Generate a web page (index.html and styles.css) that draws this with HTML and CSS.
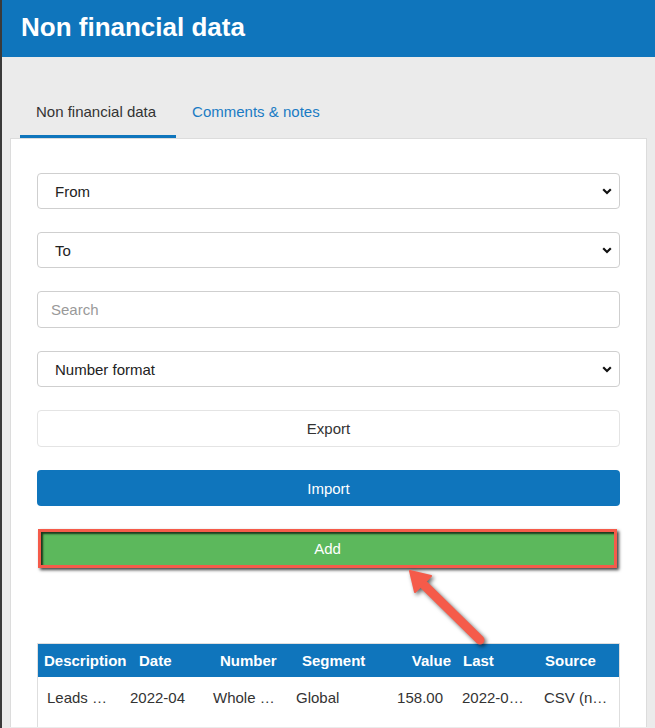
FILE: index.html
```html
<!DOCTYPE html>
<html>
<head>
<meta charset="utf-8">
<link rel="stylesheet" href="styles.css">
</head>
<body>
<div class="app">
  <header class="top"><h1 class="title">Non financial data</h1></header>
  <nav class="tabs">
    <a class="tab active">Non financial data</a>
    <a class="tab">Comments &amp; notes</a>
  </nav>
  <main class="panel">
    <div class="field select"><span>From</span><svg class="chev" width="10" height="7" viewBox="0 0 10 7"><path d="M1.2 1.3 L5 5 L8.8 1.3" fill="none" stroke="#111" stroke-width="2.2"/></svg></div>
    <div class="field select"><span>To</span><svg class="chev" width="10" height="7" viewBox="0 0 10 7"><path d="M1.2 1.3 L5 5 L8.8 1.3" fill="none" stroke="#111" stroke-width="2.2"/></svg></div>
    <div class="field search"><span>Search</span></div>
    <div class="field select"><span>Number format</span><svg class="chev" width="10" height="7" viewBox="0 0 10 7"><path d="M1.2 1.3 L5 5 L8.8 1.3" fill="none" stroke="#111" stroke-width="2.2"/></svg></div>
    <div class="btn btn-export">Export</div>
    <div class="btn btn-import">Import</div>
    <div class="btn btn-add">Add</div>
    <div class="table">
      <div class="thead">
        <div>Description</div><div>Date</div><div>Number</div><div>Segment</div><div class="num">Value</div><div>Last</div><div>Source</div>
      </div>
      <div class="trow">
        <div>Leads …</div><div>2022-04</div><div>Whole …</div><div>Global</div><div class="num">158.00</div><div>2022-0…</div><div>CSV (n…</div>
      </div>
    </div>
  </main>
  <svg class="arrow" width="100" height="95" viewBox="0 0 100 95">
    <line x1="27" y1="25" x2="85" y2="82" stroke="#f55b4a" stroke-width="9" stroke-linecap="round"/>
    <polygon points="15,13 20,34 36,18" fill="#f55b4a" stroke="#f55b4a" stroke-width="2" stroke-linejoin="round"/>
  </svg>
</div>
</body>
</html>
```

FILE: styles.css
```css
* { box-sizing: border-box; }
html, body { margin: 0; padding: 0; }
body {
  font-family: "Liberation Sans", Arial, sans-serif;
  background: #ebebeb;
  color: #333;
}
.app {
  position: relative;
  border-left: 2px solid #3a3a3a;
  height: 728px;
  background: #ebebeb;
  overflow: hidden;
}
.top {
  background: #0f75bc;
  height: 57px;
  padding-left: 19px;
  display: flex;
  align-items: center;
}
.title {
  margin: 0;
  margin-top: -3px;
  color: #fff;
  font-size: 26px;
  font-weight: bold;
}
.tabs {
  display: flex;
  padding-top: 35px;
  padding-left: 18px;
}
.tab {
  font-size: 15px;
  line-height: 20px;
  padding: 10px 20px 13px 16px;
  color: #1a7bc4;
  border-bottom: 3px solid transparent;
}
.tab.active {
  color: #333;
  border-bottom-color: #0f75bc;
}
.panel {
  margin: 0 8px 0 8px;
  background: #fff;
  border: 1px solid #dcdcdc;
  border-bottom: none;
  padding: 34px 26px 0 26px;
  display: flex;
  flex-direction: column;
  gap: 23px;
}
.field {
  height: 36px;
  border: 1px solid #cfcfcf;
  border-radius: 4px;
  display: flex;
  align-items: center;
  justify-content: space-between;
  font-size: 15px;
  color: #222;
  padding: 0 7px 0 17px;
}
.field.search {
  padding-left: 13px;
  color: #999;
  height: 37px;
}
.chev { display: block; }
.btn {
  height: 37px;
  border-radius: 4px;
  display: flex;
  align-items: center;
  justify-content: center;
  font-size: 15px;
}
.btn-export {
  border: 1px solid #e4e4e4;
  color: #333;
}
.btn-import {
  background: #0f75bc;
  color: #fff;
  height: 36px;
}
.btn-add {
  background: #5cb85c;
  color: #fff;
  height: 39px;
  margin-left: 1px;
  margin-right: 3px;
  border: 3px solid #f55b4a;
  border-radius: 0;
  box-shadow: 2px 2px 3px rgba(0,0,0,0.75), inset 2px 2px 2px rgba(0,0,0,0.7);
  margin-bottom: 52px;
}
.table {
  border: 1px solid #dedede;
  border-bottom: none;
  font-size: 15px;
}
.thead {
  background: #0f75bc;
  color: #fff;
  font-weight: bold;
  height: 33px;
  display: grid;
  grid-template-columns: 95px 81px 82px 100px 61px 82px 1fr;
  padding-left: 6px;
  align-items: center;
}
.thead .num { text-align: right; padding-right: 12px; }
.trow {
  display: grid;
  grid-template-columns: 83px 83px 83px 91px 75px 82px 1fr;
  padding-left: 9px;
  padding-bottom: 10px;
  height: 50px;
  align-items: center;
  color: #333;
}
.trow .num { text-align: right; padding-right: 19px; }
.arrow {
  position: absolute;
  left: 393px;
  top: 558px;
  filter: drop-shadow(2px 2px 2px rgba(0,0,0,0.6));
}
```
